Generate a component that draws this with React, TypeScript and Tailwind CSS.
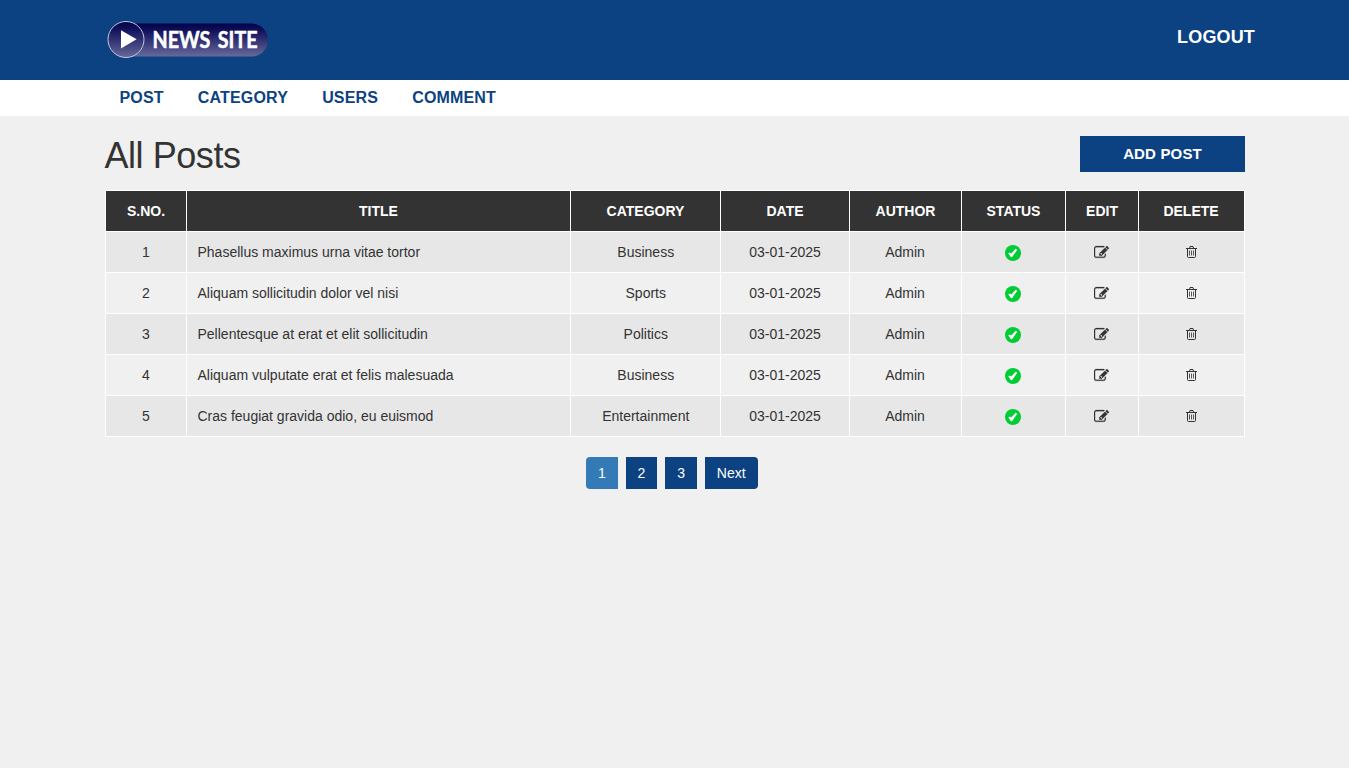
const columns = ['S.No.', 'Title', 'Category', 'Date', 'Author', 'Status', 'Edit', 'Delete'];

const posts = [
  { id: 1, title: 'Phasellus maximus urna vitae tortor', category: 'Business' },
  { id: 2, title: 'Aliquam sollicitudin dolor vel nisi', category: 'Sports' },
  { id: 3, title: 'Pellentesque at erat et elit sollicitudin', category: 'Politics' },
  { id: 4, title: 'Aliquam vulputate erat et felis malesuada', category: 'Business' },
  { id: 5, title: 'Cras feugiat gravida odio, eu euismod', category: 'Entertainment' },
];

function Logo() {
  return (
    <svg width="164" height="40" viewBox="0 0 164 40" className="block" role="img" aria-label="News Site">
      <defs>
        <linearGradient id="pill" x1="0" y1="0" x2="0" y2="1">
          <stop offset="0" stopColor="#02024a" />
          <stop offset="0.2" stopColor="#10105a" />
          <stop offset="1" stopColor="#66699b" />
        </linearGradient>
      </defs>
      <rect x="6" y="3.5" width="156" height="33" rx="16.5" fill="url(#pill)" />
      <circle cx="20" cy="19.5" r="18" fill="url(#pill)" stroke="#c3c6dc" strokeWidth="1" />
      <path d="M15 10.2v18.2l15.6-9.1z" fill="#fff" />
      <text
        x="46.5"
        y="27.6"
        fill="#fff"
        stroke="#fff"
        strokeWidth="0.5"
        fontFamily="Lato, sans-serif"
        fontWeight="700"
        fontSize="22"
        wordSpacing="3"
        textLength="105"
        lengthAdjust="spacingAndGlyphs"
      >
        NEWS SITE
      </text>
    </svg>
  );
}

function StatusIcon() {
  return (
    <svg width="16" height="16" viewBox="0 0 16 16" className="block">
      <circle cx="8" cy="8" r="8" fill="#00cc33" />
      <path d="M3.3 8.6l1.5-1.1 1.5 1.1 4.3-4.9 1.7 1L7 12.2H6z" fill="#fff" />
    </svg>
  );
}

function EditIcon() {
  return (
    <svg width="15" height="15" viewBox="0 0 1792 1792" fill="currentColor" stroke="currentColor" strokeWidth="25" className="block">
      <path d="M888 1184l116-116-152-152-116 116v56h96v96h56zM1408 1058v190q0 119-84.5 203.5t-203.5 84.5h-832q-119 0-203.5-84.5t-84.5-203.5v-832q0-119 84.5-203.5t203.5-84.5h832q63 0 117 25 15 7 18 23 3 17-9 29l-49 49q-14 14-32 8-23-6-45-6h-832q-66 0-113 47t-47 113v832q0 66 47 113t113 47h832q66 0 113-47t47-113v-126q0-13 9-22l64-64q15-15 35-7t20 29zm-96-738l288 288-672 672h-288v-288zm444 132l-92 92-288-288 92-92q28-28 68-28t68 28l152 152q28 28 28 68t-28 68z" />
    </svg>
  );
}

function TrashIcon() {
  return (
    <svg width="11" height="12" viewBox="0 0 11 12" fill="none" stroke="currentColor" className="block">
      <path d="M0 2.5h11M3.5 2.5L4 .5h3l.5 2M1.5 2.5v8q0 1 1 1h6q1 0 1-1v-8" />
      <path d="M3.5 4.5v5M5.5 4.5v5M7.5 4.5v5" strokeOpacity="0.8" />
    </svg>
  );
}

export default function App() {
  return (
    <div className="min-h-screen bg-[#f0f0f0] font-['Liberation_Sans',Arial,sans-serif] text-sm leading-5 text-[#333]">
      <header className="h-20 bg-[#0d4282]">
        <div className="mx-auto flex w-[1140px] items-start justify-between">
          <a href="#" className="ml-[1.5px] mt-5">
            <Logo />
          </a>
          <a href="#" className="-mr-[10.5px] mt-[27px] text-lg leading-5 font-bold tracking-[0.15px] text-white uppercase">
            Logout
          </a>
        </div>
      </header>

      <nav className="h-9 bg-white">
        <ul className="mx-auto flex w-[1140px] gap-[34.2px] pl-[15px] pt-2 text-base leading-5 font-bold tracking-[0.15px] text-[#0d4282] uppercase">
          <li><a href="#">Post</a></li>
          <li><a href="#">Category</a></li>
          <li><a href="#">Users</a></li>
          <li><a href="#">Comment</a></li>
        </ul>
      </nav>

      <main className="mx-auto w-[1140px] pt-5">
        <div className="flex items-start justify-between">
          <h1 className="text-4xl leading-[39px] tracking-[-0.45px]">All Posts</h1>
          <a href="#" className="flex h-9 w-[165px] items-center justify-center bg-[#0d4282] pl-px text-[15px] font-bold tracking-[0.15px] text-white uppercase">
            Add Post
          </a>
        </div>

        <table className="mt-[15px] w-[1139px] table-fixed border-collapse text-center">
          <colgroup>
            <col className="w-[81px]" />
            <col className="w-[384px]" />
            <col className="w-[150px]" />
            <col className="w-[129px]" />
            <col className="w-[112px]" />
            <col className="w-[104px]" />
            <col className="w-[73px]" />
            <col className="w-[106px]" />
          </colgroup>
          <thead>
            <tr className="h-[41px] bg-[#333] text-white uppercase">
              {columns.map((c) => (
                <th key={c} className="border border-white py-0 pr-0 pl-px font-bold last:pl-0">{c}</th>
              ))}
            </tr>
          </thead>
          <tbody>
            {posts.map((p) => (
              <tr key={p.id} className="h-[41px] odd:bg-[#e7e7e7]">
                <td className="border border-white py-0 pr-0 pl-px">{p.id}</td>
                <td className="border border-white py-0 pr-0 pl-[11px] text-left">{p.title}</td>
                <td className="border border-white py-0 pr-0 pl-[1.5px]">{p.category}</td>
                <td className="border border-white py-0 pr-0 pl-px">03-01-2025</td>
                <td className="border border-white p-0">Admin</td>
                <td className="border border-white p-0">
                  <div className="flex justify-center pt-0.5"><StatusIcon /></div>
                </td>
                <td className="border border-white p-0">
                  <a href="#" className="flex justify-center"><EditIcon /></a>
                </td>
                <td className="border border-white p-0">
                  <a href="#" className="flex justify-center"><TrashIcon /></a>
                </td>
              </tr>
            ))}
          </tbody>
        </table>

        <div className="mt-5 flex gap-[7.8px] pl-[481.5px] leading-8 text-white">
          <a href="#" className="rounded-l bg-[#337ab7] px-3">1</a>
          <a href="#" className="bg-[#0d4282] px-3">2</a>
          <a href="#" className="bg-[#0d4282] px-3">3</a>
          <a href="#" className="rounded-r bg-[#0d4282] px-3">Next</a>
        </div>
      </main>
    </div>
  );
}
